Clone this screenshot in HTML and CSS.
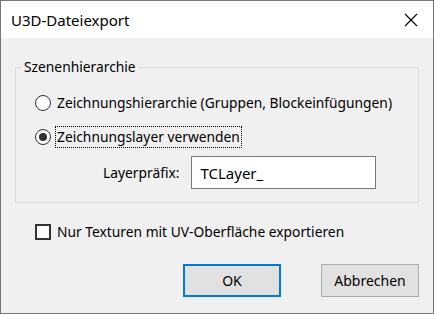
FILE: index.html
```html
<!DOCTYPE html>
<html lang="de">
<head>
<meta charset="utf-8">
<link rel="stylesheet" href="styles.css">
</head>
<body>
<div class="window">
  <div class="titlebar">
    <span class="title">U3D-Dateiexport</span>
    <svg class="close" width="14" height="14" viewBox="0 0 14 14"><path d="M1 1 L13 13 M13 1 L1 13" stroke="#000" stroke-width="1.1" fill="none"/></svg>
  </div>
  <div class="content">
    <fieldset class="group">
      <legend class="legend">Szenenhierarchie</legend>
      <div class="row radio-row">
        <span class="radio"></span>
        <span class="label">Zeichnungshierarchie (Gruppen, Blockeinfügungen)</span>
      </div>
      <div class="row radio-row">
        <span class="radio checked"></span>
        <span class="label focus">Zeichnungslayer verwenden</span>
      </div>
      <div class="row prefix-row">
        <span class="prefix-label">Layerpräfix:</span>
        <div class="textbox">TCLayer_</div>
      </div>
    </fieldset>
    <div class="row check-row">
      <span class="checkbox"></span>
      <span class="label">Nur Texturen mit UV-Oberfläche exportieren</span>
    </div>
    <div class="buttons">
      <button class="btn primary">OK</button>
      <button class="btn">Abbrechen</button>
    </div>
  </div>
</div>
</body>
</html>
```

FILE: styles.css
```css
* { box-sizing: border-box; }
html, body { margin: 0; padding: 0; }
body {
  width: 434px;
  height: 314px;
  font-family: "Noto Sans", "Open Sans", sans-serif;
  font-size: 13.8px;
  color: #000;
  background: #f0f0f0;
}
.window {
  width: 434px;
  height: 314px;
  border: 1px solid #777;
  display: flex;
  flex-direction: column;
  background: #f0f0f0;
}
.titlebar {
  height: 37px;
  background: #fff;
  display: flex;
  align-items: center;
  justify-content: space-between;
  padding: 0 15px 0 10px;
}
.title {
  font-size: 15px;
  line-height: 20px;
}
.close { display: block; }
.content {
  flex: 1;
  padding: 19px 14px 0 14px;
  display: flex;
  flex-direction: column;
}
.group {
  margin: 0;
  border: 1px solid #dcdcdc;
  padding: 9px 0 13px 19px;
  min-width: 0;
}
.legend {
  padding: 0 3px;
  margin-left: -14px;
  line-height: 20px;
}
.row {
  display: flex;
  align-items: center;
}
.radio-row {
  height: 34px;
  gap: 4px;
}
.label {
  line-height: 20px;
  padding: 0 1px;
  border: 1px solid transparent;
}
.label.focus {
  border: 1px dotted #000;
}
.radio {
  width: 16px;
  height: 16px;
  border-radius: 50%;
  border: 1px solid #333;
  background: #fff;
  display: flex;
  align-items: center;
  justify-content: center;
}
.radio.checked::after {
  content: "";
  width: 8px;
  height: 8px;
  border-radius: 50%;
  background: #333;
}
.prefix-row {
  margin-top: 2px;
  padding-left: 68px;
  gap: 12px;
}
.textbox {
  width: 185px;
  height: 33px;
  border: 1px solid #7a7a7a;
  background: #fff;
  padding: 0 8px;
  display: flex;
  align-items: center;
  font-size: 15px;
}
.check-row {
  margin-top: 18px;
  margin-left: 20px;
  gap: 4px;
}
.checkbox {
  width: 16px;
  height: 16px;
  border: 2px solid #333;
  background: #fff;
}
.buttons {
  display: flex;
  justify-content: flex-end;
  gap: 40px;
  margin-top: 21px;
}
.btn {
  width: 98px;
  height: 33px;
  font-family: inherit;
  font-size: 14px;
  background: #e1e1e1;
  border: 1px solid #adadad;
  color: #000;
  padding: 0;
}
.btn.primary {
  border: 2px solid #0078d7;
}
```
